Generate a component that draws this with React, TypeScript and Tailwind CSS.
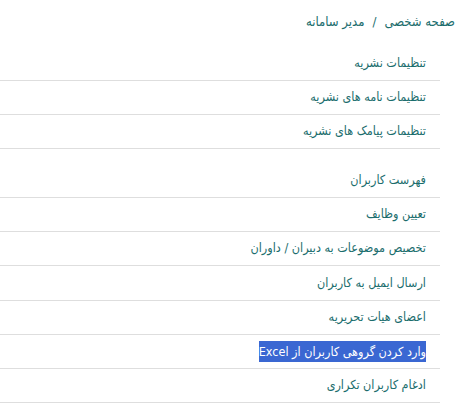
const groupOne = ["تنظیمات نشریه", "تنظیمات نامه های نشریه", "تنظیمات پیامک های نشریه"]

const groupTwo = [
  "فهرست کاربران",
  "تعیین وظایف",
  "تخصیص موضوعات به دبیران / داوران",
  "ارسال ایمیل به کاربران",
  "اعضای هیات تحریریه",
  "وارد کردن گروهی کاربران از Excel",
  "ادغام کاربران تکراری",
]

const selected = "وارد کردن گروهی کاربران از Excel"

function MenuList({ items }: { items: string[] }) {
  return (
    <ul className="w-full">
      {items.map((item) => (
        <li key={item} className="h-[34px] flex items-center pr-[14px] border-b border-[#dedede]">
          {item === selected ? (
            <span className="bg-[#3a67d2] text-white leading-[21px]">{item}</span>
          ) : (
            <a href="#" className="text-[#1b6d6d]">
              {item}
            </a>
          )}
        </li>
      ))}
    </ul>
  )
}

export default function App() {
  return (
    <div dir="rtl" className="w-[459px] h-[412px] bg-white text-[13px] font-stretch-condensed font-['DejaVu_Sans',sans-serif]">
      <div className="pt-[12px] pr-[4px] h-[47px] text-[#1b6d6d]">
        <span>صفحه شخصی</span>
        <span className="mx-[8px]">/</span>
        <span>مدیر سامانه</span>
      </div>
      <div className="pr-[19px] text-[12.5px]">
        <MenuList items={groupOne} />
        <div className="h-[15px]" />
        <MenuList items={groupTwo.slice(0, 3)} />
        <ul className="w-full">
          <li className="h-[1px]" />
        </ul>
        <MenuList items={groupTwo.slice(3)} />
      </div>
    </div>
  )
}
